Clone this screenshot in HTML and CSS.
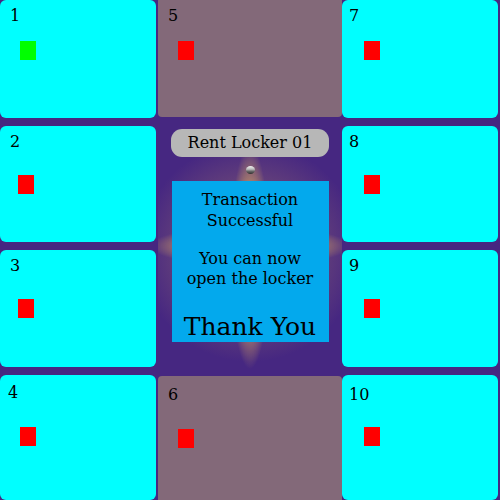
FILE: index.html
```html
<!DOCTYPE html>
<html>
<head>
<meta charset="utf-8">
<link rel="stylesheet" href="styles.css">
</head>
<body>
<div class="board">
  <div class="col side left">
    <div class="locker cyan r1"><span class="num">1</span><span class="sq green s1"></span></div>
    <div class="locker cyan r2"><span class="num">2</span><span class="sq s2"></span></div>
    <div class="locker cyan r3"><span class="num">3</span><span class="sq s2"></span></div>
    <div class="locker cyan r4"><span class="num">4</span><span class="sq s4"></span></div>
  </div>
  <div class="col mid">
    <div class="locker mauve m1"><span class="num">5</span><span class="sq s1"></span></div>
    <div class="center">
      <div class="pill">Rent Locker 01</div>
      <div class="ball"></div>
      <div class="panel">
        <p class="msg">Transaction<br>Successful</p>
        <p class="msg second">You can now<br>open the locker</p>
        <p class="thanks">Thank You</p>
      </div>
    </div>
    <div class="locker mauve m2"><span class="num">6</span><span class="sq s4"></span></div>
  </div>
  <div class="col side right">
    <div class="locker cyan r1"><span class="num">7</span><span class="sq s1"></span></div>
    <div class="locker cyan r2"><span class="num">8</span><span class="sq s2"></span></div>
    <div class="locker cyan r3"><span class="num">9</span><span class="sq s2"></span></div>
    <div class="locker cyan r4"><span class="num">10</span><span class="sq s4"></span></div>
  </div>
</div>
</body>
</html>
```
FILE: styles.css
```css
html, body {
  margin: 0;
  padding: 0;
}
body {
  width: 500px;
  height: 500px;
  overflow: hidden;
  background: #462781;
  font-family: "DejaVu Serif", serif;
  color: #000;
}
.board {
  display: flex;
  height: 500px;
}
.col {
  display: flex;
  flex-direction: column;
}
.side {
  width: 156px;
  gap: 8px;
}
.mid {
  width: 184px;
  margin-left: 2px;
}
.locker {
  display: flex;
  flex-direction: column;
  align-items: flex-start;
  padding: 6px 0 0 10px;
  box-sizing: border-box;
}
.cyan {
  background: #00ffff;
  border-radius: 6px;
}
.mauve {
  background: #836979;
  border-radius: 0 0 4px 4px;
}
.r1 { height: 118px; }
.r2 { height: 116px; }
.r3 { height: 117px; }
.r4 { height: 125px; }
.m1 { height: 117px; }
.m2 { height: 124px; margin-top: 1px; border-radius: 4px 4px 0 0; padding-top: 9px; }
.r4 .num { margin-top: 2px; }
.left .r4 { padding-left: 8px; }
.right .r4 .num { margin-top: 4px; }
.right .locker { padding-left: 7px; }
.num {
  font-size: 16px;
  line-height: 19px;
}
.sq {
  display: block;
  width: 16px;
  height: 19px;
  background: #ff0000;
  margin-left: 10px;
}
.right .sq { margin-left: 15px; }
.left .r4 .sq { margin-left: 12px; }
.right .r4 .sq { margin-top: 23px; }
.green { background: #00ff00; }
.s1 { margin-top: 16px; }
.s2 { margin-top: 24px; }
.s4 { margin-top: 25px; }
.left .r2 .sq, .left .r3 .sq { margin-left: 8px; }
.center {
  height: 259px;
  display: flex;
  flex-direction: column;
  align-items: center;
  background:
    radial-gradient(ellipse 100px 20px at 92px 129px, rgb(226,176,96), rgba(226,176,96,0.7) 55%, rgba(226,176,96,0) 100%),
    radial-gradient(ellipse 20px 112px at 92px 140px, rgb(226,176,96), rgba(226,176,96,0.7) 55%, rgba(226,176,96,0) 100%),
    radial-gradient(circle 110px at 92px 135px, rgba(214,160,96,0.55), rgba(214,160,96,0) 100%);
}
.pill {
  margin-top: 12px;
  width: 158px;
  height: 28px;
  box-sizing: border-box;
  background: #b7b7b7;
  border-radius: 11px;
  font-size: 16px;
  line-height: 28px;
  text-align: center;
}
.ball {
  margin-top: 9px;
  width: 9px;
  height: 8px;
  border-radius: 50%;
  background: linear-gradient(180deg, #f2f2f2 0%, #bdbdbd 40%, #6a6a6a 65%, #2e2e2e 100%);
}
.panel {
  margin-top: 7px;
  width: 157px;
  height: 161px;
  box-sizing: border-box;
  background: #03a9ed;
  text-align: center;
  padding-top: 8px;
}
.msg {
  margin: 0;
  font-size: 16px;
  line-height: 21px;
}
.second {
  margin-top: 18px;
  line-height: 20px;
}
.thanks {
  margin: 23px 0 0;
  font-size: 25px;
  line-height: 30px;
}
```
